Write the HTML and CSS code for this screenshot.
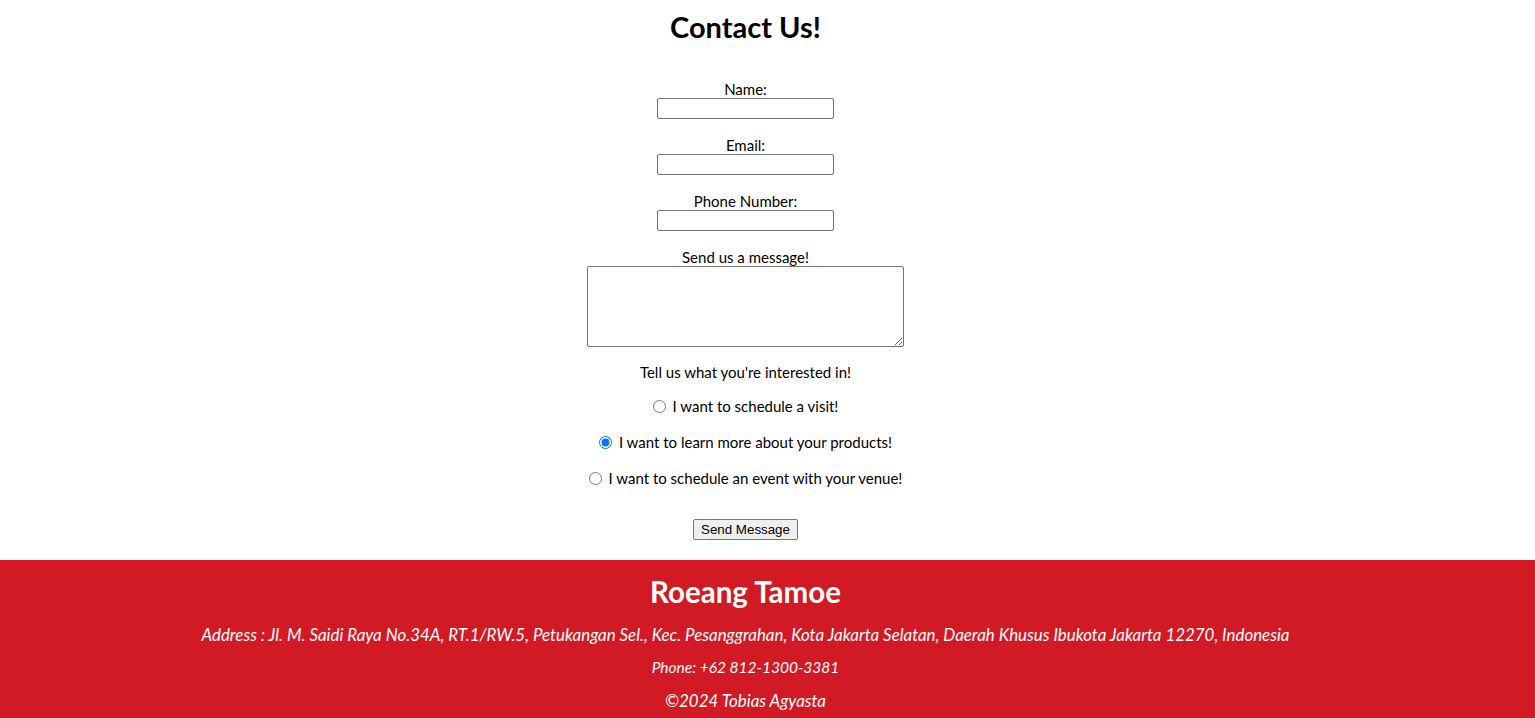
FILE: index.html
```html
<!DOCTYPE html>
<html lang="en">
<head>
<meta charset="utf-8">
<title>Contact Us</title>
<link rel="stylesheet" href="styles.css">
</head>
<body>
<main class="contact">
  <h1 class="title">Contact Us!</h1>
  <form class="form">
    <div class="field">
      <label class="label" for="name">Name:</label>
      <input class="input" type="text" id="name">
    </div>
    <div class="field">
      <label class="label" for="email">Email:</label>
      <input class="input" type="email" id="email">
    </div>
    <div class="field">
      <label class="label" for="phone">Phone Number:</label>
      <input class="input" type="tel" id="phone">
    </div>
    <div class="field">
      <label class="label" for="msg">Send us a message!</label>
      <textarea class="textarea" id="msg"></textarea>
    </div>
    <p class="question">Tell us what you're interested in!</p>
    <div class="options">
      <label class="option"><input class="radio" type="radio" name="interest"> I want to schedule a visit!</label>
      <label class="option"><input class="radio" type="radio" name="interest" checked> I want to learn more about your products!</label>
      <label class="option"><input class="radio" type="radio" name="interest"> I want to schedule an event with your venue!</label>
    </div>
    <button class="submit" type="button">Send Message</button>
  </form>
</main>
<footer class="footer">
  <h2 class="brand">Roeang Tamoe</h2>
  <p class="info">Address : Jl. M. Saidi Raya No.34A, RT.1/RW.5, Petukangan Sel., Kec. Pesanggrahan, Kota Jakarta Selatan, Daerah Khusus Ibukota Jakarta 12270, Indonesia</p>
  <p class="info info-phone">Phone: +62 812-1300-3381</p>
  <p class="info">©2024 Tobias Agyasta</p>
</footer>
</body>
</html>
```

FILE: styles.css
```css
html, body {
  margin: 0;
  padding: 0;
  background: #fff;
}

body {
  font-family: Lato, "Open Sans", sans-serif;
  color: #000;
}

.contact {
  display: flex;
  flex-direction: column;
  align-items: center;
  padding-right: 44px;
}

.title {
  margin: 9px 0 0;
  font-size: 29px;
  line-height: 36px;
  font-weight: 700;
}

.form {
  margin-top: 35px;
  display: flex;
  flex-direction: column;
  align-items: center;
}

.field {
  display: flex;
  flex-direction: column;
  align-items: center;
  margin-bottom: 17px;
}

.field:nth-child(4) {
  margin-bottom: 16px;
}

.label {
  font-size: 15px;
  line-height: 18px;
  height: 18px;
}

.input {
  box-sizing: border-box;
  width: 177px;
  height: 21px;
  margin: 0;
  border: 1px solid #767676;
  border-radius: 2px;
  padding: 1px 2px;
}

.textarea {
  box-sizing: border-box;
  width: 317px;
  height: 81px;
  margin: 0;
  border: 1px solid #767676;
  border-radius: 2px;
  padding: 2px;
  resize: both;
}

.question {
  margin: 0;
  font-size: 15px;
  line-height: 18px;
}

.options {
  display: flex;
  flex-direction: column;
  align-items: center;
  gap: 18px;
  margin-top: 16px;
}

.option {
  font-size: 15px;
  line-height: 18px;
  height: 18px;
  display: flex;
  align-items: center;
}

.radio {
  margin: 0 7px 0 0;
  width: 13px;
  height: 13px;
}

.submit {
  margin-top: 32px;
  height: 21px;
  box-sizing: border-box;
  padding: 1px 7px;
  font-family: "Liberation Sans", Arial, sans-serif;
  font-size: 13.33px;
  background: #efefef;
  border: 1px solid #767676;
  border-radius: 2px;
  color: #000;
}

.footer {
  margin-top: 20px;
  background: #d21a24;
  color: #fff;
  text-align: center;
  padding: 17px 44px 16px 0;
}

.brand {
  margin: 0 0 18px;
  font-size: 29.5px;
  line-height: 30px;
  font-weight: 700;
}

.info {
  margin: 0 0 14px;
  font-size: 16.9px;
  line-height: 19px;
  font-style: italic;
}

.info-phone {
  font-size: 15.5px;
}
```
